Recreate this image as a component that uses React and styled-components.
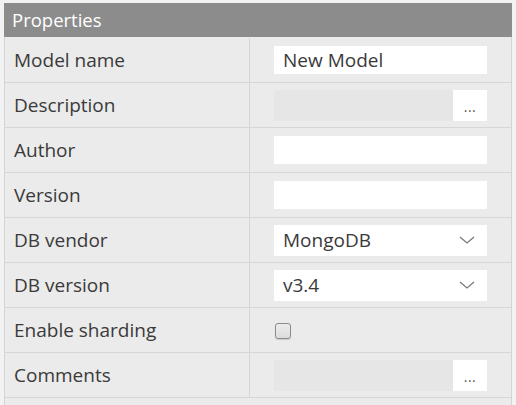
import React from 'react';
import styled, { createGlobalStyle } from 'styled-components';

const GlobalStyle = createGlobalStyle`
  html, body {
    margin: 0;
    padding: 0;
    background: #f2f2f2;
    font-family: "Open Sans", "Liberation Sans", sans-serif;
  }
`;

const rows = [
  { label: 'Model name', kind: 'text', value: 'New Model' },
  { label: 'Description', kind: 'popup' },
  { label: 'Author', kind: 'text', value: '' },
  { label: 'Version', kind: 'text', value: '' },
  { label: 'DB vendor', kind: 'select', value: 'MongoDB' },
  { label: 'DB version', kind: 'select', value: 'v3.4' },
  { label: 'Enable sharding', kind: 'check' },
  { label: 'Comments', kind: 'popup' },
];

function Chevron() {
  return (
    <svg width="16" height="8" viewBox="0 0 16 8">
      <path d="M1 1 L8 7 L15 1" fill="none" stroke="#7a7a7a" strokeWidth="1.3" />
    </svg>
  );
}

function Field({ row }) {
  if (row.kind === 'text') return <TextBox>{row.value}</TextBox>;
  if (row.kind === 'select')
    return (
      <SelectBox>
        <span>{row.value}</span>
        <Chevron />
      </SelectBox>
    );
  if (row.kind === 'check') return <CheckBox />;
  return (
    <PopupBox>
      <PopupArea />
      <DotsButton>...</DotsButton>
    </PopupBox>
  );
}

export default function App() {
  return (
    <>
      <GlobalStyle />
      <Panel>
        <Header>Properties</Header>
        {rows.map((row) => (
          <Row key={row.label}>
            <Label>{row.label}</Label>
            <Value>
              <Field row={row} />
            </Value>
          </Row>
        ))}
        <Row $empty />
      </Panel>
    </>
  );
}

const Panel = styled.div`
  width: 508px;
  margin: 3px 0 0 4px;
  border-left: 1px solid #d4d4d4;
  border-right: 1px solid #d4d4d4;
  box-sizing: border-box;
  background: #ebebeb;
`;

const Header = styled.div`
  height: 34px;
  line-height: 33px;
  background: #8c8c8c;
  color: #ffffff;
  font-size: 18.5px;
  padding-left: 8px;
  margin-left: -1px;
  margin-right: -1px;
`;

const Row = styled.div`
  display: grid;
  grid-template-columns: 245px 1fr;
  height: ${(p) => (p.$empty ? '12px' : '44px')};
  border-top: 1px solid #d6d6d6;
  &:nth-child(2) {
    border-top: 1px solid #ebebeb;
  }
`;

const Label = styled.div`
  display: flex;
  align-items: center;
  padding-left: 9px;
  font-size: 19px;
  color: #3a3a3a;
  border-right: 1px solid #d6d6d6;
`;

const Value = styled.div`
  display: flex;
  align-items: center;
  padding-left: 24px;
`;

const TextBox = styled.div`
  width: 213px;
  height: 28px;
  box-sizing: border-box;
  background: #ffffff;
  padding-left: 9px;
  font-size: 19px;
  line-height: 28px;
  color: #3a3a3a;
`;

const SelectBox = styled.div`
  width: 213px;
  height: 31px;
  box-sizing: border-box;
  background: #ffffff;
  padding: 0 12px 0 9px;
  display: flex;
  align-items: center;
  justify-content: space-between;
  font-size: 19px;
  color: #3a3a3a;
`;

const PopupBox = styled.div`
  width: 213px;
  height: 31px;
  display: flex;
`;

const PopupArea = styled.div`
  flex: 1;
  background-color: #e6e6e6;
  background-image: radial-gradient(#f6f6f6 0.6px, transparent 0.7px);
  background-size: 2px 2px;
`;

const DotsButton = styled.div`
  width: 34px;
  background: #ffffff;
  color: #555;
  font-size: 14px;
  letter-spacing: 0.5px;
  display: flex;
  align-items: flex-end;
  justify-content: center;
  padding-bottom: 5px;
  box-sizing: border-box;
`;

const CheckBox = styled.div`
  width: 16px;
  height: 16px;
  margin: 1px 0 0 1px;
  box-sizing: border-box;
  border: 1px solid #8c8c8c;
  border-radius: 3px;
  background: linear-gradient(#ececec, #dcdcdc);
  box-shadow: 0 1px 1px rgba(0, 0, 0, 0.15);
`;
